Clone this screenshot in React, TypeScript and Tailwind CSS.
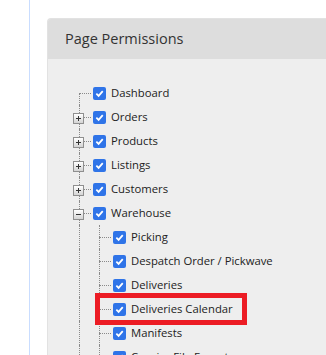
import React from "react";

type Node = { label: string; toggle?: "+" | "-"; children?: Node[] };

const tree: Node[] = [
  { label: "Dashboard" },
  { label: "Orders", toggle: "+" },
  { label: "Products", toggle: "+" },
  { label: "Listings", toggle: "+" },
  { label: "Customers", toggle: "+" },
  {
    label: "Warehouse",
    toggle: "-",
    children: [
      { label: "Picking" },
      { label: "Despatch Order / Pickwave" },
      { label: "Deliveries" },
      { label: "Deliveries Calendar" },
      { label: "Manifests" },
      { label: "Courier File Export" },
      { label: "Stock Takes" },
    ],
  },
  { label: "Reports", toggle: "+" },
];

function Check() {
  return (
    <span className="w-[13px] h-[13px] rounded-[2px] bg-[#2f74e8] flex items-center justify-center shrink-0">
      <svg width="9" height="9" viewBox="0 0 10 10">
        <path d="M1.5 5.2 L4 7.6 L8.6 2.4" fill="none" stroke="white" strokeWidth="2" />
      </svg>
    </span>
  );
}

function Toggle({ sign }: { sign: "+" | "-" }) {
  return (
    <span className="absolute left-[4px] top-[8px] w-[11px] h-[11px] border border-[#8f8f8f] bg-gradient-to-b from-[#ffffff] to-[#d4d4d4] flex items-center justify-center z-10">
      <span className="absolute w-[5px] h-px bg-[#333]" />
      {sign === "+" && <span className="absolute w-px h-[5px] bg-[#333]" />}
    </span>
  );
}

// one 20px connector column: vertical dotted line at x=10 and a horizontal stub
function Branch({ first, stub, toggle }: { first?: boolean; stub?: boolean; toggle?: "+" | "-" }) {
  return (
    <span className="relative w-[20px] h-[24px] shrink-0">
      <span
        className={`absolute left-[10px] w-0 border-l border-dotted border-[#8a8a8a] ${first ? "top-[12px] bottom-0" : "top-0 bottom-0"}`}
      />
      {stub && <span className="absolute left-[10px] top-[12px] w-[12px] h-0 border-t border-dotted border-[#8a8a8a]" />}
      {toggle && <Toggle sign={toggle} />}
    </span>
  );
}

function Row({ node, depth, first }: { node: Node; depth: number; first?: boolean }) {
  const marked = node.label === "Deliveries Calendar";
  return (
    <div className="relative flex items-center h-[24px]">
      {depth === 1 && <Branch />}
      <Branch first={first} stub toggle={node.toggle} />
      <span className="ml-[4px]">
        <Check />
      </span>
      <span className="ml-[5px] whitespace-nowrap text-[#222]">{node.label}</span>
      {marked && (
        <span className="absolute left-[26px] top-[-4px] w-[152px] h-[32px] border-[5px] border-[#ec1c24] z-20" />
      )}
    </div>
  );
}

export default function App() {
  return (
    <div className="h-screen overflow-hidden bg-white pl-[29px] font-['Open_Sans',sans-serif]">
      <div className="h-full border-l border-[#c9ddff] pl-[17px] pt-[18px]">
        <div className="rounded-tl-[4px] overflow-hidden bg-[#eeeeee] border-l border-t border-[#e2e2e2] h-[400px]">
          <div className="h-[40px] bg-[#dddddd] flex items-center pl-[17px] text-[14.5px] text-[#333]">
            Page Permissions
          </div>
          <div className="pt-[22px] pl-[21px] text-[11.3px]">
            {tree.map((n, i) => (
              <div key={n.label}>
                <Row node={n} depth={0} first={i === 0} />
                {n.children?.map((c) => (
                  <Row key={c.label} node={c} depth={1} />
                ))}
              </div>
            ))}
          </div>
        </div>
      </div>
    </div>
  );
}
